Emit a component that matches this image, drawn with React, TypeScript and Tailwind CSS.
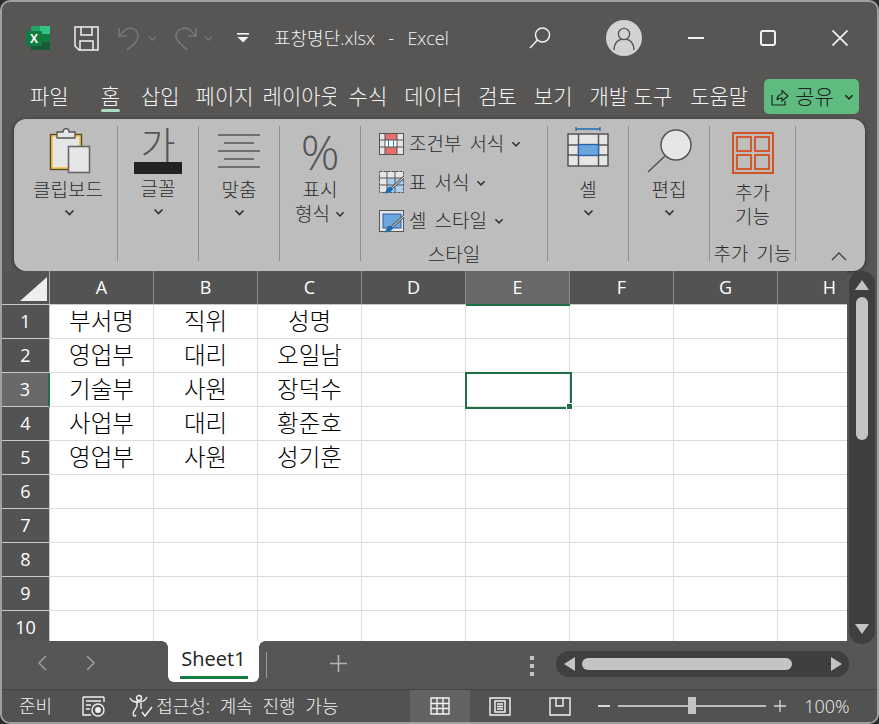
import type { ReactNode } from "react";

const FONT = "font-['Open_Sans','Noto_Sans_CJK_KR',sans-serif]";

const Chevron = ({ className = "", size = 11, color = "#333" }: { className?: string; size?: number; color?: string }) => (
  <svg width={size} height={size} viewBox="0 0 11 11" className={className} fill="none">
    <path d="M1.5 3.5 L5.5 7.5 L9.5 3.5" stroke={color} strokeWidth="1.7" />
  </svg>
);

const ExcelLogo = () => (
  <svg width="25" height="25" viewBox="0 0 25 25">
    <rect x="5" y="0" width="19" height="24" rx="1.5" fill="#21a366" />
    <rect x="14" y="0" width="10" height="8" fill="#33c481" />
    <rect x="5" y="8" width="9" height="8" fill="#185c37" opacity="0.5" />
    <rect x="14" y="8" width="10" height="8" fill="#107c41" />
    <rect x="5" y="16" width="19" height="8" fill="#185c37" />
    <rect x="0" y="5" width="16" height="15" rx="1.5" fill="#107c41" />
    <text x="8" y="17" textAnchor="middle" fontSize="12" fontWeight="700" fill="#fff" fontFamily="Liberation Sans">X</text>
  </svg>
);

const TitleBar = () => (
  <div className="flex h-[72px] shrink-0 items-center text-white">
    <div className="ml-[24px] w-[48px]"><ExcelLogo /></div>
    <svg width="25" height="25" viewBox="0 0 25 25" fill="none" stroke="#f2f2f2" strokeWidth="1.5">
      <path d="M1 1 H24 V24 H5 L1 20 Z" />
      <path d="M7 1 V9 H18 V1 M6 24 V15 H19 V24" />
    </svg>
    <svg width="24" height="25" viewBox="0 0 24 25" fill="none" stroke="#777675" strokeWidth="1.6" className="ml-[19px]">
      <path d="M1 2 V10 H9 M1 10 L7 4 C12 0 20 3 20 10 C20 15 16 18 9 24" />
    </svg>
    <Chevron size={9} color="#777675" className="ml-[6px]" />
    <svg width="24" height="25" viewBox="0 0 24 25" fill="none" stroke="#777675" strokeWidth="1.6" className="ml-[16px]">
      <path d="M23 2 V10 H15 M23 10 L17 4 C12 0 3 3 3 10 C3 15 8 18 14 24" />
    </svg>
    <Chevron size={9} color="#777675" className="ml-[7px]" />
    <svg width="12" height="10" viewBox="0 0 12 10" fill="#f2f2f2" className="ml-[24px]">
      <rect x="0" y="0" width="12" height="1.6" />
      <path d="M0.5 4 H11.5 L6 9.5 Z" />
    </svg>
    <span className="ml-[25px] w-[255px] whitespace-pre text-[18px] font-light text-[#f4f4f4] [word-spacing:2px]">표창명단.xlsx  -  Excel</span>
    <svg width="22" height="22" viewBox="0 0 22 22" fill="none" stroke="#f2f2f2" strokeWidth="1.5">
      <circle cx="13.5" cy="8" r="7" />
      <path d="M8.5 13 L1 21" />
    </svg>
    <div className="ml-[55px] flex h-[36px] w-[36px] items-center justify-center rounded-full bg-[#d2d2d2]">
      <svg width="26" height="26" viewBox="0 0 26 26" fill="none" stroke="#575655" strokeWidth="1.4">
        <circle cx="13" cy="9" r="5.6" />
        <path d="M3 25 C3 18 7 15 10 14.5 M23 25 C23 18 19 15 16 14.5" />
      </svg>
    </div>
    <span className="ml-[46px] h-[2px] w-[16px] bg-[#f2f2f2]" />
    <span className="ml-[56px] h-[16px] w-[16px] rounded-[3px] border-2 border-[#f2f2f2]" />
    <svg width="16" height="16" viewBox="0 0 16 16" stroke="#f2f2f2" strokeWidth="1.7" className="ml-[56px]">
      <path d="M0.5 0.5 L15.5 15.5 M15.5 0.5 L0.5 15.5" />
    </svg>
  </div>
);

const tabs: { label: string; left: string; width?: string }[] = [
  { label: "파일", left: "ml-[28px]" },
  { label: "홈", left: "ml-[32px]" },
  { label: "삽입", left: "ml-[21px]" },
  { label: "페이지", left: "ml-[16px]" },
  { label: "레이아웃", left: "ml-[9px]", width: "w-[73px]" },
  { label: "수식", left: "ml-[13px]" },
  { label: "데이터", left: "ml-[17px]" },
  { label: "검토", left: "ml-[16px]" },
  { label: "보기", left: "ml-[17px]" },
  { label: "개발 도구", left: "ml-[17px]" },
  { label: "도움말", left: "ml-[18px]" },
];

const TabRow = () => (
  <div className="flex h-[45px] shrink-0 items-center text-[21px] font-light text-[#f4f4f4]">
    {tabs.map((t) => (
      <span
        key={t.label}
        className={`${t.left} ${t.width ?? ""} relative overflow-hidden whitespace-nowrap`}
      >
        {t.label}
        {t.label === "홈" && <span className="absolute bottom-0 left-0 h-[3px] w-full rounded-full bg-[#a9dcc0]" />}
      </span>
    ))}
    <div className="ml-[16px] flex h-[35px] w-[95px] items-center rounded-[5px] bg-[#5fbc80] text-[#222]">
      <svg width="18" height="18" viewBox="0 0 18 18" fill="none" stroke="#222" strokeWidth="1.2" className="ml-[7px]">
        <path d="M1 7 V17 H14 V13 M6 12 C6 8 9 6 11 6 V2.5 L17 8 L11 13 V10 C9 10 7 10 6 12 Z" />
      </svg>
      <span className="ml-[6px]">공유</span>
      <Chevron size={10} color="#222" className="ml-[10px]" />
    </div>
  </div>
);

const Group = ({ width, children, last }: { width: string; children: ReactNode; last?: boolean }) => (
  <div className={`${width} ${last ? "" : "border-r border-[#8f8f8f]"} flex h-[135px] shrink-0 flex-col items-center`}>
    {children}
  </div>
);

const ClipboardIcon = () => (
  <svg width="42" height="46" viewBox="0 0 42 46">
    <rect x="1.5" y="6.5" width="31" height="35" fill="#f5c85a" stroke="#5a4a20" strokeWidth="1.4" />
    <rect x="4" y="9" width="26" height="30" fill="#e6e6e6" />
    <path d="M8 4 H14 C14 -0.5 20 -0.5 20 4 H26 V10 H8 Z" fill="#e6e6e6" stroke="#555" strokeWidth="1.3" />
    <rect x="19.5" y="18.5" width="21" height="26" fill="#e6e6e6" stroke="#666" strokeWidth="1.6" />
  </svg>
);

const AlignIcon = () => (
  <svg width="44" height="36" viewBox="0 0 44 36" stroke="#555" strokeWidth="1.3">
    <path d="M1 1 H43 M7 9 H37 M1 17 H43 M7 25 H37 M1 33 H43" />
  </svg>
);

const CondIcon = () => (
  <svg width="25" height="22" viewBox="0 0 25 22">
    <rect x="0.5" y="0.5" width="24" height="21" fill="#e6e6e6" stroke="#555" />
    <rect x="6" y="1" width="12" height="6" fill="#e66e6e" />
    <rect x="6" y="14" width="12" height="7" fill="#e66e6e" />
    <rect x="6" y="7" width="12" height="7" fill="#fff" />
    <path d="M0 7 H25 M0 14 H25" stroke="#555" />
    <path d="M6 0 V22 M18 0 V22" stroke="#555" />
    <path d="M9.5 7 V14 M14.5 7 V14" stroke="#2a79c4" />
  </svg>
);

const BrushTail = () => (
  <>
    <path d="M25 6 L13 17" stroke="#555" strokeWidth="2.6" />
    <path d="M25 6 L13 17" stroke="#e6e6e6" strokeWidth="1" />
    <path d="M4 22 C6 22 7 20 8 18 C9 15 13 15 14 18 C13 21 9 23 4 22 Z" fill="#1d6cb0" />
  </>
);

const TableFmtIcon = () => (
  <svg width="25" height="23" viewBox="0 0 25 23">
    <rect x="0.5" y="0.5" width="24" height="21" fill="#e6e6e6" stroke="#555" strokeDasharray="3 1" />
    <rect x="8" y="7" width="16" height="14" fill="#a8d0ee" />
    <path d="M0 7 H25 M0 14 H25 M8 0 V22 M16 0 V22" stroke="#555" />
    <BrushTail />
  </svg>
);

const CellStyleIcon = () => (
  <svg width="25" height="23" viewBox="0 0 25 23">
    <rect x="0.5" y="0.5" width="24" height="21" fill="#e6e6e6" stroke="#555" />
    <rect x="4" y="4" width="18" height="14" fill="#6ba6dc" stroke="#2b5ea8" />
    <BrushTail />
  </svg>
);

const CellsIcon = () => (
  <svg width="42" height="41" viewBox="0 0 42 41">
    <path d="M9 3 H33 M9 1 V5 M33 1 V5" stroke="#1d6cb0" strokeWidth="1.3" fill="none" />
    <rect x="1" y="8" width="40" height="32" fill="#e6e6e6" stroke="#555" strokeWidth="1.5" />
    <path d="M1 19 H41 M1 29 H41 M11.5 8 V40 M31.5 8 V40" stroke="#555" strokeWidth="1.5" />
    <rect x="11.5" y="18.5" width="20" height="11" fill="#68a6db" stroke="#2b5ea8" strokeWidth="1.3" />
  </svg>
);

const MagnifierIcon = () => (
  <svg width="45" height="44" viewBox="0 0 45 44" fill="none">
    <circle cx="29" cy="16" r="15" fill="#e6e6e6" stroke="#555" strokeWidth="1.5" />
    <path d="M18 27 L1 43" stroke="#555" strokeWidth="1.5" />
  </svg>
);

const AddinsIcon = () => (
  <svg width="42" height="42" viewBox="0 0 42 42" fill="none">
    <rect x="1" y="1" width="40" height="40" stroke="#d83b01" strokeWidth="1.6" />
    <rect x="5" y="5" width="14" height="14" stroke="#d83b01" strokeWidth="1.5" />
    <rect x="23" y="5" width="14" height="14" stroke="#d83b01" strokeWidth="1.5" />
    <rect x="5" y="23" width="14" height="14" stroke="#d83b01" strokeWidth="1.5" />
    <rect x="23" y="23" width="14" height="14" stroke="#d83b01" strokeWidth="1.5" />
  </svg>
);

const StyleRow = ({ icon, label }: { icon: ReactNode; label: string }) => (
  <div className="flex h-[38.5px] items-center [word-spacing:3px]">
    <span className="flex w-[30px] shrink-0">{icon}</span>
    <span className="whitespace-nowrap">{label}</span>
    <Chevron size={10} className="ml-[7px]" />
  </div>
);

const Ribbon = () => (
  <div className="mx-[12px] flex h-[152px] shrink-0 rounded-[12px] bg-[#bdbdbd] pt-[7px] text-[19px] font-light leading-[24px] text-[#2b2b2b] shadow-[0_1px_4px_rgba(0,0,0,0.5)]">
    <Group width="w-[104px]">
      <div className="ml-[8px] mt-[2px] flex h-[50px] items-start"><ClipboardIcon /></div>
      <span className="ml-[5px]">클립보드</span>
      <Chevron className="ml-[8px] mt-[5px]" />
    </Group>
    <Group width="w-[81px]">
      <div className="flex h-[36px] items-center text-[38px] font-light leading-[36px] text-[#555]">가</div>
      <span className="h-[12px] w-[48px] bg-[#222]" />
      <span className="mt-[3px]">글꼴</span>
      <Chevron className="mt-[5px]" />
    </Group>
    <Group width="w-[81px]">
      <div className="mt-[8px] flex h-[44px]"><AlignIcon /></div>
      <span>맞춤</span>
      <Chevron className="mt-[5px]" />
    </Group>
    <Group width="w-[81px]">
      <div className="flex h-[52px] items-center text-[48px] font-light leading-[52px] text-[#555]">%</div>
      <span>표시</span>
      <span className="flex items-center">형식<Chevron size={10} className="ml-[5px]" /></span>
    </Group>
    <Group width="w-[187px]">
      <div className="mt-[-1px] flex h-[116px] flex-col self-start pl-[18px]">
        <StyleRow icon={<CondIcon />} label="조건부 서식" />
        <StyleRow icon={<TableFmtIcon />} label="표 서식" />
        <StyleRow icon={<CellStyleIcon />} label="셀 스타일" />
      </div>
      <span className="mt-[2px]">스타일</span>
    </Group>
    <Group width="w-[81px]">
      <div className="flex h-[52px] items-start"><CellsIcon /></div>
      <span>셀</span>
      <Chevron className="mt-[5px]" />
    </Group>
    <Group width="w-[81px]">
      <div className="mt-[3px] flex h-[49px] items-start"><MagnifierIcon /></div>
      <span>편집</span>
      <Chevron className="mt-[5px]" />
    </Group>
    <Group width="w-[86px]">
      <div className="mt-[6px] flex h-[48px]"><AddinsIcon /></div>
      <span className="mt-[7px]">추가</span>
      <span>기능</span>
      <span className="mt-[13px] whitespace-nowrap [word-spacing:3px]">추가 기능</span>
    </Group>
    <div className="flex flex-1 items-end justify-center pb-[10px] pl-[16px]">
      <svg width="16" height="10" viewBox="0 0 16 10" fill="none" stroke="#444" strokeWidth="1.4">
        <path d="M1 9 L8 2 L15 9" />
      </svg>
    </div>
  </div>
);

const columns = ["A", "B", "C", "D", "E", "F", "G", "H"];

const rows: string[][] = [
  ["부서명", "직위", "성명"],
  ["영업부", "대리", "오일남"],
  ["기술부", "사원", "장덕수"],
  ["사업부", "대리", "황준호"],
  ["영업부", "사원", "성기훈"],
  [], [], [], [], [],
];

const Sheet = () => (
  <div className="relative h-[370px] w-[845px] overflow-hidden">
    <div className="flex h-[34px] border-b border-[#c8c8c8] bg-[#535353] text-[18px] text-white">
      <div className="relative w-[48px] shrink-0 border-r border-[#a8a8a8]">
        <svg width="27" height="24" viewBox="0 0 27 24" className="absolute left-[18px] top-[6px]">
          <path d="M27 0 V24 H0 Z" fill="#eeeeee" />
        </svg>
      </div>
      {columns.map((c) => (
        <div
          key={c}
          className={`flex w-[104px] shrink-0 items-center justify-center border-r border-[#8a8a8a] ${c === "E" ? "bg-[#696969]" : ""}`}
        >
          {c}
        </div>
      ))}
    </div>
    {rows.map((cells, i) => (
      <div key={i} className="flex h-[34px]">
        <div
          className={`flex w-[48px] shrink-0 items-center justify-center border-b border-r border-[#c8c8c8] text-[18px] text-white ${i === 2 ? "border-r-2 border-r-[#1f7145] bg-[#696969]" : "bg-[#535353]"}`}
        >
          {i + 1}
        </div>
        {columns.map((c, j) => (
          <div
            key={c}
            className="flex w-[104px] shrink-0 items-center justify-center border-b border-r border-[#dcdcdc] bg-white text-[23.5px] font-light text-black"
          >
            {cells[j] ?? ""}
          </div>
        ))}
      </div>
    ))}
    <span className="absolute left-[464px] top-[33px] h-[2px] w-[104px] bg-[#1f7145]" />
    <div className="absolute left-[463px] top-[101px] h-[37px] w-[107px] border-2 border-[#1f7145]">
      <span className="absolute -bottom-[3px] -right-[3px] h-[7px] w-[7px] border border-white bg-[#1f7145]" />
    </div>
  </div>
);

const VScroll = () => (
  <div className="relative z-10 ml-[2px] flex h-[373px] w-[26px] shrink-0 flex-col items-center rounded-full bg-[#3f3f3f]">
    <svg width="14" height="10" viewBox="0 0 14 10" className="mt-[9px]" fill="#c4c4c4"><path d="M7 0 L14 10 H0 Z" /></svg>
    <div className="mt-[7px] h-[143px] w-[12px] rounded-full bg-[#c4c4c4]" />
    <svg width="14" height="10" viewBox="0 0 14 10" className="mb-[10px] mt-auto" fill="#c4c4c4"><path d="M0 0 H14 L7 10 Z" /></svg>
  </div>
);

const SheetBar = () => (
  <div className="flex h-[48px] shrink-0 items-start text-[#9c9c9c]">
    <svg width="10" height="16" viewBox="0 0 10 16" fill="none" stroke="#9c9c9c" strokeWidth="1.6" className="ml-[35px] mt-[14px]"><path d="M9 1 L2 8 L9 15" /></svg>
    <svg width="10" height="16" viewBox="0 0 10 16" fill="none" stroke="#9c9c9c" strokeWidth="1.6" className="ml-[39px] mt-[14px]"><path d="M1 1 L8 8 L1 15" /></svg>
    <div className="relative ml-[72px] flex h-[41px] w-[91px] flex-col items-center rounded-b-[6px] bg-white text-[20px] leading-[35px] text-[#222]">
      <span className="absolute left-[-6px] top-0 h-[6px] w-[6px] bg-[radial-gradient(circle_at_0_100%,#575655_5.5px,#ffffff_6px)]" />
      <span className="absolute right-[-6px] top-0 h-[6px] w-[6px] bg-[radial-gradient(circle_at_100%_100%,#575655_5.5px,#ffffff_6px)]" />
      Sheet1
      <span className="h-[3px] w-[68px] bg-[#107c41]" />
    </div>
    <span className="ml-[7px] mt-[11px] h-[26px] w-px bg-[#9c9c9c]" />
    <svg width="17" height="17" viewBox="0 0 17 17" stroke="#b4b4b4" strokeWidth="1.6" className="ml-[63px] mt-[14px]"><path d="M8.5 0 V17 M0 8.5 H17" /></svg>
    <div className="ml-[183px] mt-[15px] flex w-[4px] flex-col gap-[4px]">
      <span className="h-[4px] w-[4px] bg-[#c4c4c4]" />
      <span className="h-[4px] w-[4px] bg-[#c4c4c4]" />
      <span className="h-[4px] w-[4px] bg-[#c4c4c4]" />
    </div>
    <div className="ml-[22px] mt-[10px] flex h-[26px] w-[293px] items-center rounded-full bg-[#3f3f3f]">
      <svg width="11" height="14" viewBox="0 0 11 14" fill="#c4c4c4" className="ml-[8px]"><path d="M11 0 V14 L0 7 Z" /></svg>
      <span className="ml-[7px] h-[12px] w-[210px] rounded-full bg-[#c4c4c4]" />
      <svg width="11" height="14" viewBox="0 0 11 14" fill="#c4c4c4" className="ml-[39px]"><path d="M0 0 V14 L11 7 Z" /></svg>
    </div>
  </div>
);

const StatusBar = () => (
  <div className="flex h-[33px] shrink-0 items-center border-t border-[#454545] bg-[#525252] text-[18px] font-light text-[#f0f0f0]">
    <span className="ml-[17px]">준비</span>
    <svg width="23" height="21" viewBox="0 0 23 21" fill="none" stroke="#f0f0f0" strokeWidth="1.4" className="ml-[30px]">
      <path d="M1 1 H22 M1 1 V19 H9 M22 1 V6 M4 5 H19 M4 9 H9 M4 13 H8" />
      <circle cx="16" cy="14" r="6" />
      <circle cx="16" cy="14" r="2.2" fill="#f0f0f0" />
    </svg>
    <svg width="24" height="24" viewBox="0 0 24 24" fill="none" stroke="#f0f0f0" strokeWidth="1.4" className="ml-[24px]">
      <circle cx="10" cy="4" r="2.5" />
      <path d="M1 4 C3 8 6 8 10 8 C14 8 16 7 18 3 M8 8 C9 13 7 14 5 17 C3 20 5 24 7 21 M12 9 V15" />
      <path d="M13 18 L16 22 L23 13" />
    </svg>
    <span className="ml-[3px] w-[254px] whitespace-nowrap [word-spacing:5px]">접근성: 계속 진행 가능</span>
    <div className="flex h-full w-[60px] items-center justify-center bg-[#636363]">
      <svg width="20" height="18" viewBox="0 0 20 18" fill="none" stroke="#f4f4f4" strokeWidth="1.4"><path d="M1 1 H19 V17 H1 Z M1 6.5 H19 M1 11.5 H19 M7 1 V17 M13 1 V17" /></svg>
    </div>
    <svg width="22" height="19" viewBox="0 0 22 19" fill="none" stroke="#f4f4f4" strokeWidth="1.4" className="ml-[19px]"><path d="M1 1 H21 V18 H1 Z M6 4 H16 V15 H6 Z M8 7 H14 M8 9.5 H14 M8 12 H14" /></svg>
    <svg width="22" height="19" viewBox="0 0 22 19" fill="none" stroke="#f4f4f4" strokeWidth="1.4" className="ml-[38px]"><path d="M1 1 H21 V18 H1 Z M7 1 V9 H14 V1" /></svg>
    <span className="ml-[27px] h-[1.5px] w-[12px] bg-[#d8d8d8]" />
    <div className="relative ml-[8px] h-[2px] w-[148px] bg-[#bdbdbd]">
      <span className="absolute left-[70px] top-[-8px] h-[17px] w-[8px] bg-[#c4c4c4]" />
    </div>
    <svg width="12" height="12" viewBox="0 0 12 12" stroke="#d8d8d8" strokeWidth="1.3" className="ml-[8px]"><path d="M6 0 V12 M0 6 H12" /></svg>
    <span className="ml-[18px]">100%</span>
  </div>
);

export default function App() {
  return (
    <div className={`${FONT} h-[724px] w-[879px] overflow-hidden bg-[#2a2a2a]`}>
      <div className="flex h-full w-full flex-col overflow-hidden rounded-[10px] border-2 border-[#a0a0a0] bg-[#575655]">
        <TitleBar />
        <TabRow />
        <Ribbon />
        <div className="flex h-[370px] shrink-0">
          <Sheet />
          <VScroll />
        </div>
        <SheetBar />
        <StatusBar />
      </div>
    </div>
  );
}
